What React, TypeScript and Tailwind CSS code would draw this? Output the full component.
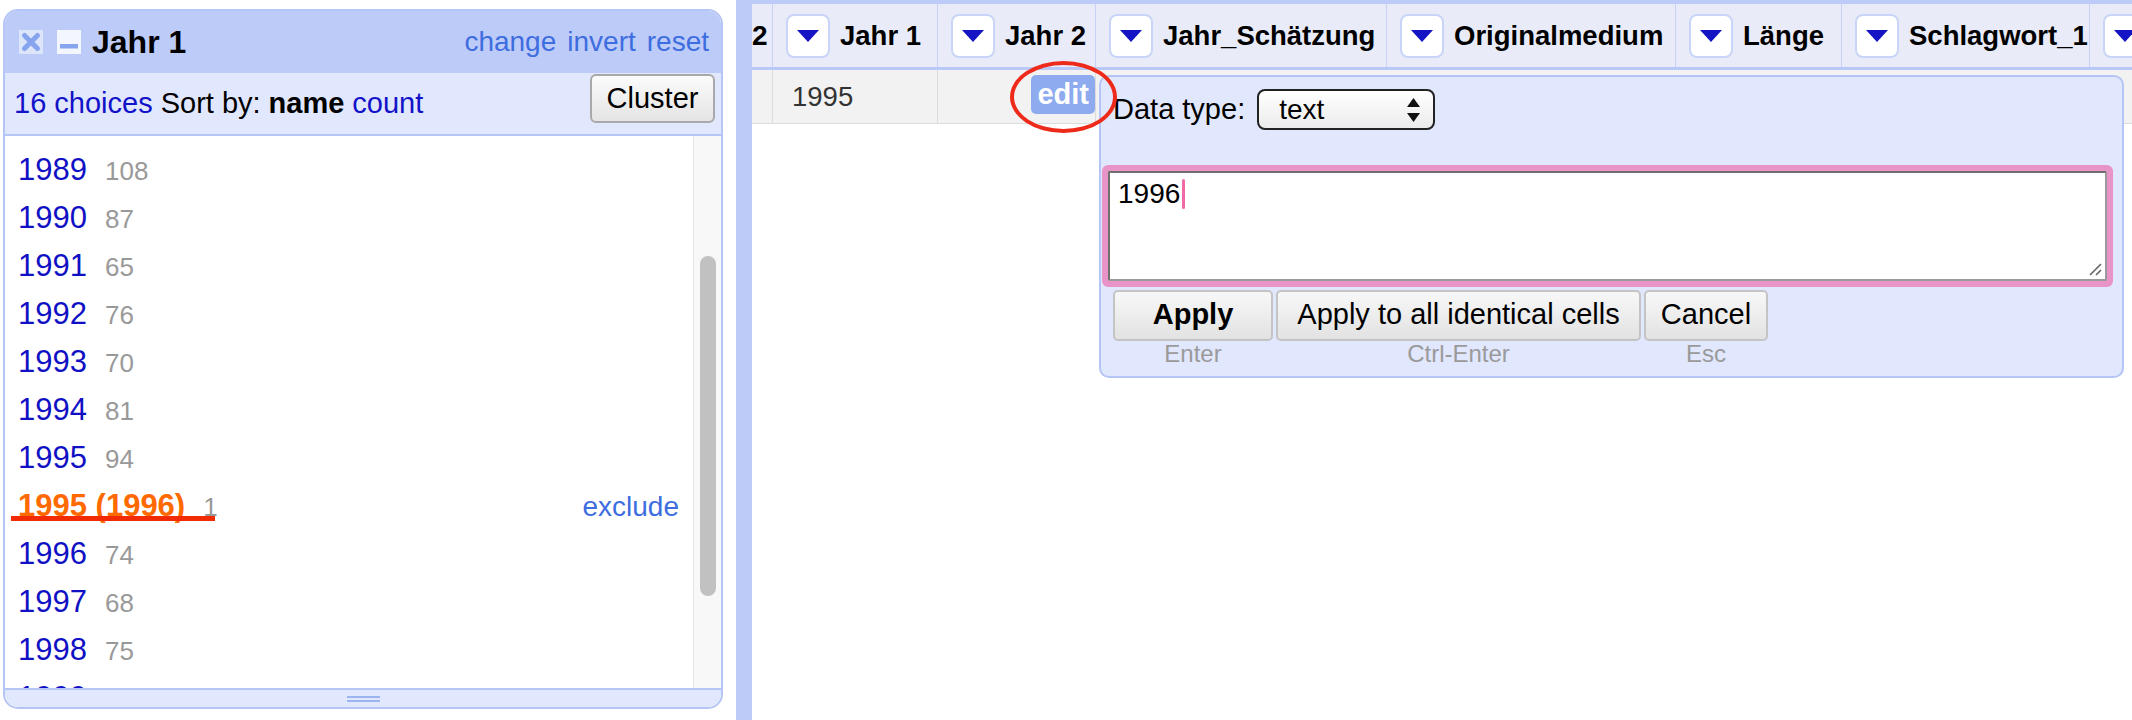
import React from "react";

const choices = [
  { name: "1989", count: 108 },
  { name: "1990", count: 87 },
  { name: "1991", count: 65 },
  { name: "1992", count: 76 },
  { name: "1993", count: 70 },
  { name: "1994", count: 81 },
  { name: "1995", count: 94 },
  { name: "1995 (1996)", count: 1, edited: true },
  { name: "1996", count: 74 },
  { name: "1997", count: 68 },
  { name: "1998", count: 75 },
  { name: "1999", count: 62 },
];

const columns = [
  { label: "Jahr 1", width: "w-[165px]" },
  { label: "Jahr 2", width: "w-[158px]" },
  { label: "Jahr_Schätzung", width: "w-[291px]" },
  { label: "Originalmedium", width: "w-[289px]" },
  { label: "Länge", width: "w-[166px]" },
  { label: "Schlagwort_1", width: "w-[248px]" },
  { label: "Schlagwort_2", width: "w-[220px]" },
];

function RemoveIcon() {
  return (
    <svg width="24" height="24" viewBox="0 0 24 24">
      <rect width="24" height="24" fill="#dde5fb" />
      <path d="M5.5 5.5 L18.5 18.5 M18.5 5.5 L5.5 18.5" stroke="#86a5ee" strokeWidth="5" strokeLinecap="round" />
    </svg>
  );
}

function MinimizeIcon() {
  return (
    <svg width="24" height="24" viewBox="0 0 24 24">
      <rect width="24" height="24" fill="#f3f6fe" />
      <rect x="3" y="14" width="18" height="4.5" fill="#86a5ee" />
    </svg>
  );
}

function DropdownButton() {
  return (
    <div className="flex h-[44px] w-[44px] shrink-0 items-center justify-center rounded-[8px] border-2 border-[#c9d5f8] bg-white">
      <svg width="22" height="12" viewBox="0 0 22 12">
        <polygon points="0,0 22,0 11,12" fill="#1414c4" />
      </svg>
    </div>
  );
}

function FacetPanel() {
  return (
    <div className="flex h-[700px] w-[720px] flex-col overflow-hidden rounded-[15px] border-2 border-[#b4c5f6]">
      <div className="flex h-[62px] shrink-0 items-center bg-[#bdcbf9] pl-[14px] pr-[12px]">
        <RemoveIcon />
        <div className="ml-[14px]">
          <MinimizeIcon />
        </div>
        <span className="ml-[11px] text-[32px] font-bold text-black">Jahr 1</span>
        <div className="ml-auto flex gap-[11px] text-[28px] text-[#3d6ddf]">
          <span>change</span>
          <span>invert</span>
          <span>reset</span>
        </div>
      </div>
      <div className="flex h-[61px] shrink-0 items-center bg-[#e1e7fd] pl-[9px] pr-[6px] text-[29px]">
        <span className="text-[#1212c9]">16 choices</span>
        <span className="ml-[8px] text-black">Sort by:</span>
        <span className="ml-[8px] font-bold text-black">name</span>
        <span className="ml-[8px] text-[#1212c9]">count</span>
        <div className="ml-auto mt-[1px] flex h-[49px] w-[125px] self-start items-center justify-center rounded-[6px] border-2 border-[#a9a9a9] bg-gradient-to-b from-[#fbfbfb] to-[#e4e4e4] text-[29px] text-black">
          Cluster
        </div>
      </div>
      <div className="flex min-h-0 flex-1 border-t-2 border-[#b4c5f6] bg-white">
        <div className="relative flex-1 overflow-hidden pl-[13px] pt-[10px]">
          {choices.map((c) => (
            <div key={c.name} className="flex h-[48px] items-baseline leading-[48px]">
              <span
                className={
                  c.edited
                    ? "text-[31px] font-bold text-[#ff6a00]"
                    : "text-[31px] text-[#1010c4]"
                }
              >
                {c.name}
              </span>
              <span className="ml-[18px] text-[26px] text-[#999999]">{c.count}</span>
              {c.edited && <span className="ml-auto mr-[14px] text-[28px] text-[#3d6ddf]">exclude</span>}
            </div>
          ))}
          <div className="absolute left-[6px] top-[380px] h-[5px] w-[204px] bg-[#f22b05]" />
        </div>
        <div className="relative w-[28px] shrink-0 border-l border-[#e6e6e6] bg-[#f8f8f8]">
          <div className="absolute left-[6px] top-[120px] h-[340px] w-[16px] rounded-full bg-[#c1c1c1]" />
        </div>
      </div>
      <div className="flex h-[19px] shrink-0 flex-col items-center justify-center gap-[2px] border-t-2 border-[#b4c5f6] bg-[#e1e7fd]">
        <div className="h-[2px] w-[33px] bg-[#9cb4ef]" />
        <div className="h-[2px] w-[33px] bg-[#9cb4ef]" />
      </div>
    </div>
  );
}

function CellEditor() {
  return (
    <div className="absolute left-[347px] top-[71px] flex h-[303px] w-[1025px] flex-col rounded-[10px] border-2 border-[#b4c5f6] bg-[#e1e7fd] pl-[12px] pr-[15px] pt-[11px]">
      <div className="flex items-center">
        <span className="text-[29px] text-black">Data type:</span>
        <div className="ml-[12px] flex h-[41px] w-[178px] items-center rounded-[8px] border-2 border-[#222] bg-gradient-to-b from-[#ffffff] to-[#ececec] pl-[20px] pr-[13px]">
          <span className="text-[28px] text-black">text</span>
          <svg className="ml-auto" width="13" height="24" viewBox="0 0 13 24">
            <polygon points="6.5,0 13,9 0,9" fill="#111" />
            <polygon points="0,15 13,15 6.5,24" fill="#111" />
          </svg>
        </div>
      </div>
      <div className="relative ml-[-5px] mt-[39px] h-[110px] rounded-[2px] border-2 border-t-[#6f6f6f] border-l-[#6f6f6f] border-b-[#9a9a9a] border-r-[#9a9a9a] bg-white pl-[8px] pt-[4px] ring-[6px] ring-[#e994c8]">
        <div className="flex items-center">
          <span className="text-[28px] leading-[34px] text-black">1996</span>
          <span className="ml-[2px] h-[30px] w-[3px] rounded-full bg-[#f06aa8]" />
        </div>
        <svg className="absolute bottom-[3px] right-[3px]" width="14" height="14" viewBox="0 0 14 14">
          <path d="M2 13 L13 2 M8 13 L13 8" stroke="#666" strokeWidth="1.6" />
        </svg>
      </div>
      <div className="mt-[9px] grid grid-cols-[160px_365px_124px] gap-x-[3px]">
        <div className="flex h-[51px] items-center justify-center rounded-[5px] border-2 border-[#c4c4c4] bg-gradient-to-b from-[#f8f8f8] to-[#e2e2e2] text-[29px] font-bold text-black">
          Apply
        </div>
        <div className="flex h-[51px] items-center justify-center rounded-[5px] border-2 border-[#c4c4c4] bg-gradient-to-b from-[#f8f8f8] to-[#e2e2e2] text-[29px] text-black">
          Apply to all identical cells
        </div>
        <div className="flex h-[51px] items-center justify-center rounded-[5px] border-2 border-[#c4c4c4] bg-gradient-to-b from-[#f8f8f8] to-[#e2e2e2] text-[29px] text-black">
          Cancel
        </div>
        <div className="text-center text-[24px] leading-[26px] text-[#9a9a9a]">Enter</div>
        <div className="text-center text-[24px] leading-[26px] text-[#9a9a9a]">Ctrl-Enter</div>
        <div className="text-center text-[24px] leading-[26px] text-[#9a9a9a]">Esc</div>
      </div>
    </div>
  );
}

function DataGrid() {
  return (
    <div className="relative flex-1 overflow-hidden border-t-[4px] border-[#bdcbf9] bg-white">
      <div className="flex h-[66px] border-b-[3px] border-[#b9c8f6] bg-[#e9ecf8]">
        <div className="flex w-[21px] shrink-0 items-center overflow-hidden border-r border-[#c7d2f4] text-[28px] font-bold text-black">
          2
        </div>
        {columns.map((col) => (
          <div
            key={col.label}
            className={`flex shrink-0 items-center gap-[10px] border-r border-[#c7d2f4] pl-[13px] ${col.width}`}
          >
            <DropdownButton />
            <span className="whitespace-nowrap text-[27.5px] font-bold text-black">{col.label}</span>
          </div>
        ))}
      </div>
      <div className="flex h-[54px] border-b border-[#dcdcdc] bg-[#f2f2f2]">
        <div className="w-[21px] shrink-0 border-r border-[#dcdcdc]" />
        <div className="flex w-[165px] shrink-0 items-center border-r border-[#dcdcdc] pl-[19px] text-[27.5px] text-[#333]">
          1995
        </div>
        <div className="flex w-[158px] shrink-0 items-start justify-end border-r border-[#dcdcdc] pt-[5px]">
          <div className="flex h-[39px] items-center rounded-[5px] bg-[#8eabf0] px-[6px] text-[29px] font-bold text-white">
            edit
          </div>
        </div>
        <div className="flex-1" />
      </div>
      <CellEditor />
      <div className="absolute left-[258px] top-[57px] h-[72px] w-[107px] rounded-[50%] border-[4px] border-[#ee2b1b]" />
    </div>
  );
}

export default function App() {
  return (
    <div className="flex h-[720px] w-[2132px] overflow-hidden bg-white font-['Liberation_Sans',Arial,sans-serif]">
      <div className="w-[736px] shrink-0 pl-[3px] pt-[9px]">
        <FacetPanel />
      </div>
      <div className="w-[16px] shrink-0 bg-[#bdcbf9]" />
      <DataGrid />
    </div>
  );
}
